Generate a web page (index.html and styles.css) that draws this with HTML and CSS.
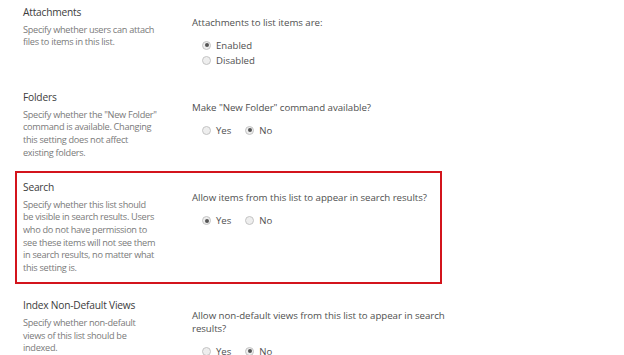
FILE: index.html
```html
<!DOCTYPE html>
<html>
<head>
<meta charset="utf-8">
<link rel="stylesheet" href="styles.css">
</head>
<body>
<div class="settings">
  <section class="row">
    <div class="info">
      <div class="title">Attachments</div>
      <div class="desc">Specify whether users can attach<br>files to items in this list.</div>
    </div>
    <div class="field">
      <div class="question">Attachments to list items are:</div>
      <div class="options stacked">
        <label class="opt"><span class="radio on"></span>Enabled</label>
        <label class="opt"><span class="radio"></span>Disabled</label>
      </div>
    </div>
  </section>
  <section class="row">
    <div class="info">
      <div class="title">Folders</div>
      <div class="desc">Specify whether the "New Folder"<br>command is available. Changing<br>this setting does not affect<br>existing folders.</div>
    </div>
    <div class="field">
      <div class="question">Make "New Folder" command available?</div>
      <div class="options">
        <label class="opt"><span class="radio"></span>Yes</label>
        <label class="opt"><span class="radio on"></span>No</label>
      </div>
    </div>
  </section>
  <section class="row highlight">
    <div class="info">
      <div class="title">Search</div>
      <div class="desc">Specify whether this list should<br>be visible in search results. Users<br>who do not have permission to<br>see these items will not see them<br>in search results, no matter what<br>this setting is.</div>
    </div>
    <div class="field">
      <div class="question">Allow items from this list to appear in search results?</div>
      <div class="options">
        <label class="opt"><span class="radio on"></span>Yes</label>
        <label class="opt"><span class="radio"></span>No</label>
      </div>
    </div>
  </section>
  <section class="row">
    <div class="info">
      <div class="title">Index Non-Default Views</div>
      <div class="desc">Specify whether non-default<br>views of this list should be<br>indexed.</div>
    </div>
    <div class="field">
      <div class="question">Allow non-default views from this list to appear in search<br>results?</div>
      <div class="options">
        <label class="opt"><span class="radio"></span>Yes</label>
        <label class="opt"><span class="radio on"></span>No</label>
      </div>
    </div>
  </section>
</div>
</body>
</html>
```
FILE: styles.css
```css
html, body {
  margin: 0;
  padding: 0;
  background: #ffffff;
  overflow: hidden;
}
body {
  font-family: "Open Sans", "Noto Sans", sans-serif;
}
.settings {
  margin-top: -2px;
  padding-left: 15px;
}
.row {
  width: 427px;
  box-sizing: border-box;
  border: 2px solid transparent;
  padding: 4px 0 7px 6px;
  margin-bottom: 6px;
  display: grid;
  grid-template-columns: 169px 262px;
}
.row.highlight {
  border-color: #d3141c;
  margin-top: -3px;
  padding-top: 6px;
  padding-bottom: 8px;
  margin-bottom: 7px;
}
.title {
  font-size: 10.2px;
  letter-spacing: -0.2px;
  line-height: 16px;
  color: #3c3c3c;
  white-space: nowrap;
}
.desc {
  margin-top: 3.75px;
  font-size: 9.2px;
  letter-spacing: -0.3px;
  line-height: 12.6px;
  color: #7a7a7a;
  white-space: nowrap;
}
.field {
  padding-top: 12.7px;
}
.question {
  font-size: 9.7px;
  letter-spacing: -0.05px;
  line-height: 12.6px;
  color: #505050;
  white-space: nowrap;
}
.options {
  margin-top: 8.7px;
  padding-left: 10px;
  display: flex;
  gap: 14px;
}
.options.stacked {
  flex-direction: column;
  gap: 0;
}
.opt {
  display: flex;
  align-items: center;
  font-size: 9.6px;
  line-height: 15px;
  color: #505050;
}
.radio {
  width: 9px;
  height: 9px;
  box-sizing: border-box;
  border: 1px solid #c4c4c4;
  border-radius: 50%;
  background: #eeeeee;
  margin-right: 5px;
  display: flex;
  align-items: center;
  justify-content: center;
}
.radio.on::after {
  content: "";
  width: 4px;
  height: 4px;
  border-radius: 50%;
  background: #555555;
}
```
